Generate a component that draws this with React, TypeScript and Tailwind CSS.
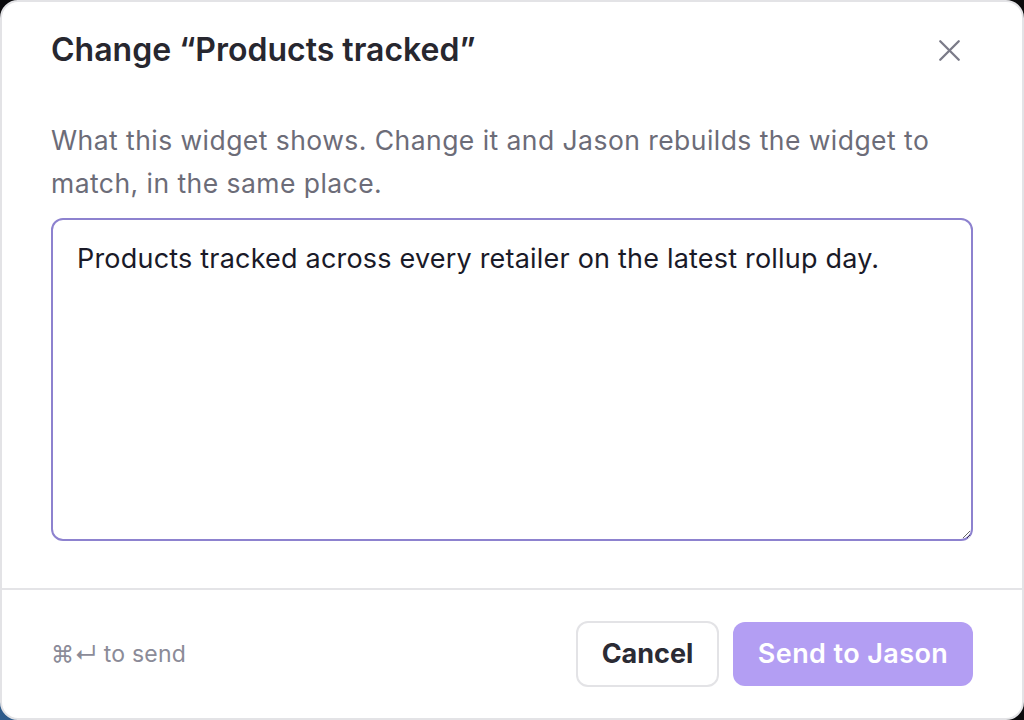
import { X } from "lucide-react";

export default function App() {
  return (
    <div
      className="w-[1024px] h-[720px] bg-[linear-gradient(45deg,#2f5d8e_0%,#0b0b0d_18%,#0b0b0d_100%)]"
      style={{ fontFamily: "Inter, 'Noto Sans', sans-serif" }}
    >
      <div className="h-full w-full bg-white rounded-[18px] border-2 border-[#e3e3e6] flex flex-col overflow-hidden">
        {/* header */}
        <div className="shrink-0 flex items-center justify-between pl-[49px] pr-[53px] pt-[28px]">
          <h2 className="text-[32px] leading-[40px] font-semibold text-[#27272f]">
            Change “Products tracked”
          </h2>
          <button className="h-10 w-10 flex items-center justify-center text-[#7b7b88]">
            <X size={37} strokeWidth={1.5} />
          </button>
        </div>

        <div className="shrink-0 px-[49px] pt-[49px]">
          <p className="text-[26.5px] leading-[43px] tracking-[0.45px] text-[#6c6c78]">
            What this widget shows. Change it and Jason rebuilds the widget to match, in the same place.
          </p>
          <textarea
            className="mt-[13px] block w-full h-[323px] rounded-[12px] border-2 border-[#8d82cf] px-[24px] pt-[19px] pb-[18px] text-[27px] leading-[40px] tracking-[0.2px] text-[#1a1a28] outline-none"
            defaultValue="Products tracked across every retailer on the latest rollup day."
          />
        </div>

        <div className="shrink-0 mt-[47px] h-[2px] bg-[#e4e4e7]" />

        <div className="shrink-0 flex items-center justify-between pl-[49px] pr-[49px] pt-[31px] pb-[30px]">
          <span className="text-[23px] tracking-[0.2px] text-[#8b8b98]">⌘↵ to send</span>
          <div className="flex items-center gap-[14px]">
            <button className="h-[66px] w-[143px] rounded-[12px] border-2 border-[#e3e3e6] bg-white text-[27px] font-bold text-[#2b2b34]">
              Cancel
            </button>
            <button className="h-[64px] w-[240px] rounded-[12px] bg-[#b39ef3] text-[27px] font-semibold tracking-[0.4px] text-white">
              Send to Jason
            </button>
          </div>
        </div>
      </div>
    </div>
  );
}
